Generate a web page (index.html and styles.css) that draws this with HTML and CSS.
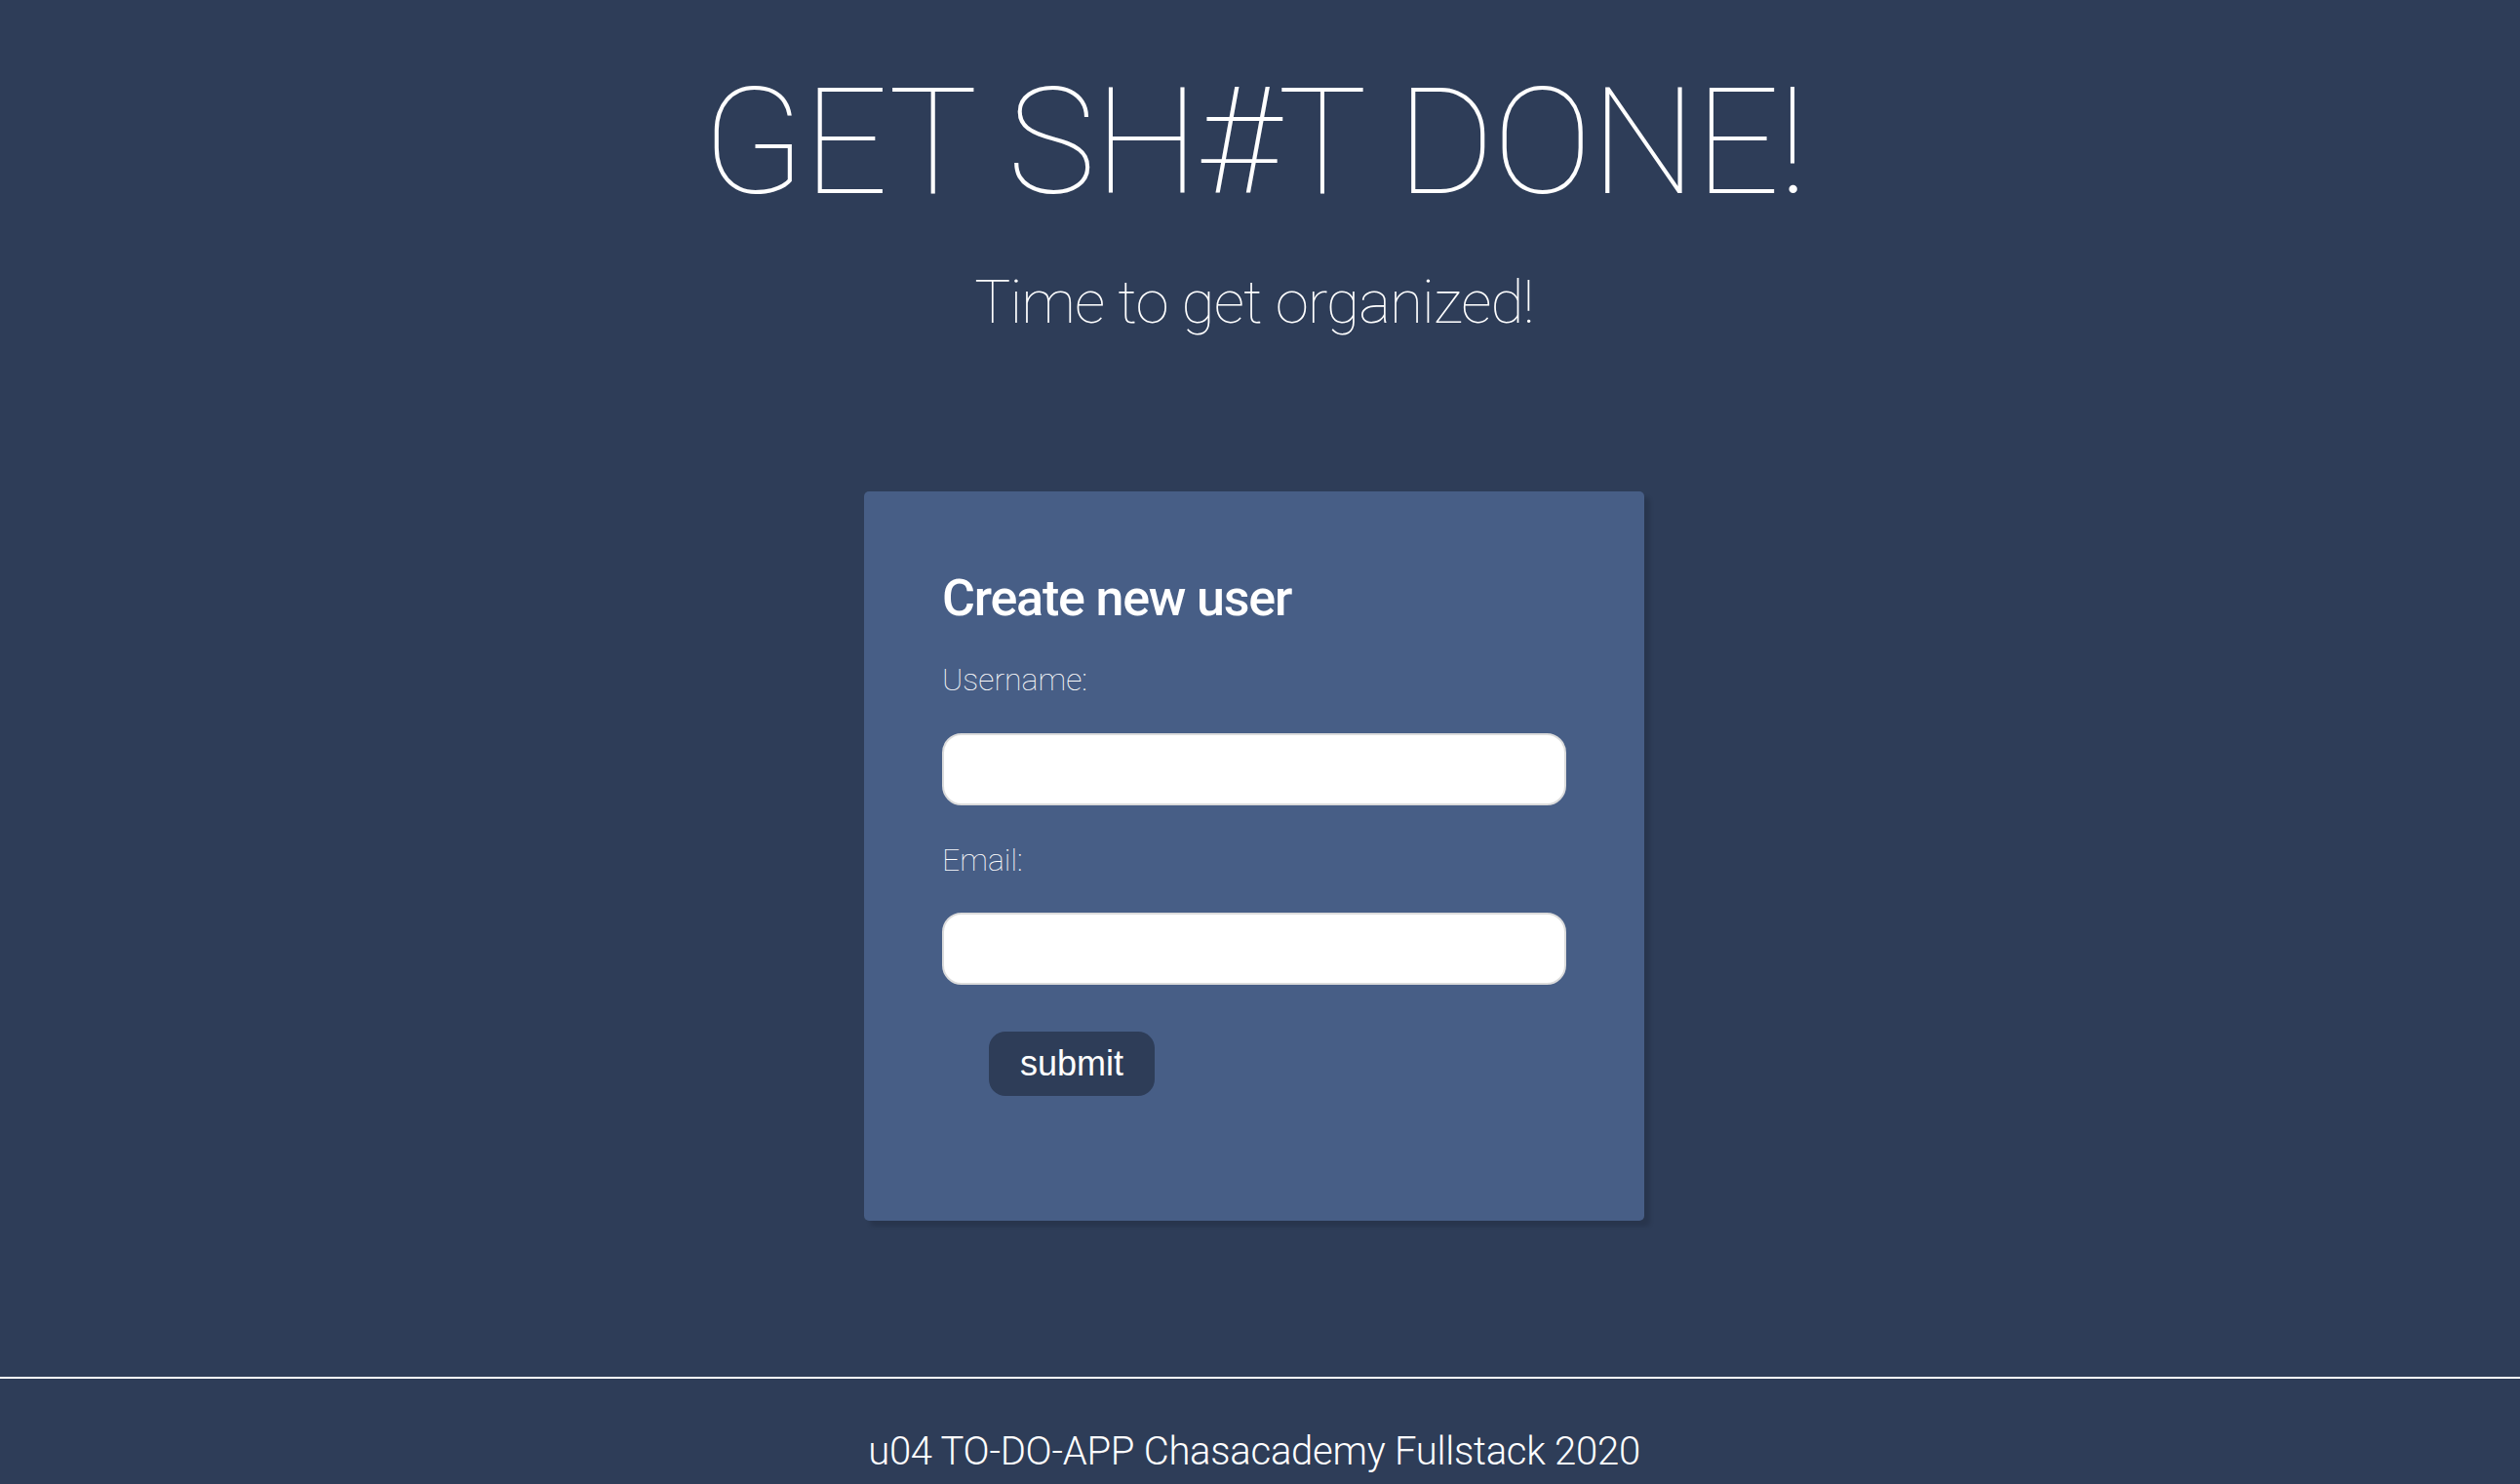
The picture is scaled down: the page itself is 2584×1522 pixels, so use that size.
FILE: index.html
```html
<!DOCTYPE html>
<html lang="en">
<head>
<meta charset="utf-8">
<title>GET SH#T DONE!</title>
<link rel="stylesheet" href="styles.css">
</head>
<body>
<div class="page">
  <header class="header">
    <h1 class="title">GET SH#T DONE!</h1>
    <p class="subtitle">Time to get organized!</p>
  </header>
  <main class="main">
    <form class="card">
      <h2 class="card-title">Create new user</h2>
      <label class="field-label" for="username">Username:</label>
      <input class="field-input" id="username" type="text">
      <label class="field-label" for="email">Email:</label>
      <input class="field-input" id="email" type="email">
      <button class="submit-btn" type="button">submit</button>
    </form>
  </main>
  <footer class="footer">
    <p class="footer-text">u04 TO-DO-APP Chasacademy Fullstack 2020</p>
  </footer>
</div>
</body>
</html>
```

FILE: styles.css
```css
* { box-sizing: border-box; }

html, body {
  margin: 0;
  padding: 0;
  background: #2e3d58;
}

body {
  font-family: Roboto, "Liberation Sans", sans-serif;
  color: #ffffff;
}

.page {
  min-height: 1522px;
  display: flex;
  flex-direction: column;
}

.header {
  display: flex;
  flex-direction: column;
  align-items: center;
  padding-top: 56px;
  padding-right: 12px;
}

.title {
  margin: 0;
  font-size: 153px;
  font-weight: 100;
  line-height: normal;
  letter-spacing: -1.5px;
}

.subtitle {
  margin: 38px 0 0;
  font-size: 62px;
  font-weight: 100;
  line-height: normal;
  letter-spacing: -0.9px;
}

.main {
  display: flex;
  justify-content: center;
  padding-top: 158px;
  padding-right: 12px;
  padding-bottom: 160px;
}

.card {
  width: 800px;
  height: 748px;
  padding: 79px 80px 80px;
  background: #475e86;
  border-radius: 5px;
  box-shadow: 6px 6px 4px rgba(0, 0, 0, 0.13);
  display: flex;
  flex-direction: column;
  align-items: flex-start;
}

.card-title {
  margin: 0;
  font-size: 52px;
  font-weight: 500;
  line-height: normal;
  letter-spacing: -1.2px;
}

.field-label {
  display: block;
  margin: 34px 0 36px;
  font-size: 32px;
  font-weight: 100;
  line-height: normal;
}

.field-label + .field-input + .field-label {
  margin-top: 37px;
  margin-bottom: 35px;
}

.field-input {
  width: 640px;
  height: 74px;
  border: 2px solid #dcdcdc;
  border-radius: 20px;
  background: #ffffff;
  padding: 0 18px;
  font-size: 30px;
  outline: none;
}

.submit-btn {
  margin: 48px 0 0 48px;
  height: 66px;
  padding: 0 32px;
  border: none;
  border-radius: 17px;
  background: #2e3d58;
  color: #ffffff;
  font-family: "Liberation Sans", Arial, sans-serif;
  font-size: 36px;
  line-height: normal;
  cursor: pointer;
}

.footer {
  border-top: 2px solid #ffffff;
  display: flex;
  justify-content: center;
  padding-right: 12px;
}

.footer-text {
  margin: 51px 0 0;
  font-size: 40px;
  font-weight: 300;
  line-height: normal;
  letter-spacing: -0.25px;
}
```
